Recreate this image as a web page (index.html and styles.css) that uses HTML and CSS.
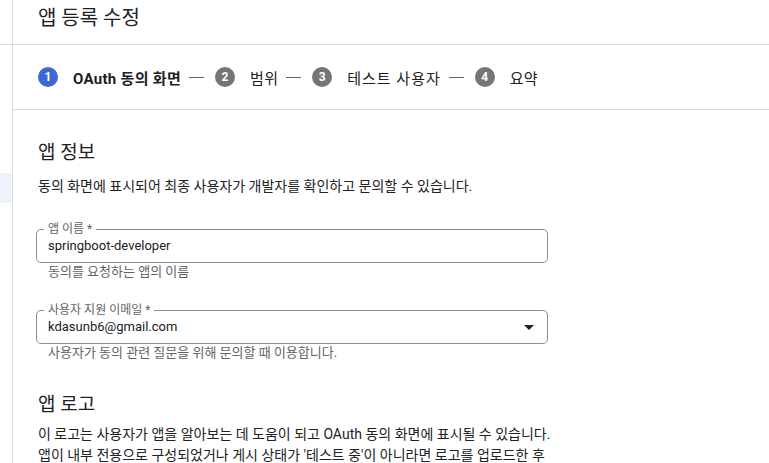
FILE: index.html
```html
<!DOCTYPE html>
<html lang="ko">
<head>
<meta charset="utf-8">
<title>앱 등록 수정</title>
<link rel="stylesheet" href="styles.css">
</head>
<body>
<div class="page">
  <aside class="side">
    <div class="side-top"></div>
    <div class="side-item"></div>
  </aside>
  <main class="main">
    <header class="header">
      <h1 class="title">앱 등록 수정</h1>
    </header>
    <nav class="stepper">
      <div class="step active"><span class="num">1</span><span class="label">OAuth 동의 화면</span></div>
      <span class="sep"></span>
      <div class="step"><span class="num">2</span><span class="label">범위</span></div>
      <span class="sep"></span>
      <div class="step"><span class="num">3</span><span class="label wide">테스트 사용자</span></div>
      <span class="sep"></span>
      <div class="step"><span class="num">4</span><span class="label">요약</span></div>
    </nav>
    <section class="content">
      <h2 class="section-title">앱 정보</h2>
      <p class="desc">동의 화면에 표시되어 최종 사용자가 개발자를 확인하고 문의할 수 있습니다.</p>

      <div class="field field-first">
        <div class="box">
          <span class="float-label">앱 이름 *</span>
          <span class="value">springboot-developer</span>
        </div>
        <div class="helper">동의를 요청하는 앱의 이름</div>
      </div>

      <div class="field">
        <div class="box">
          <span class="float-label">사용자 지원 이메일 *</span>
          <span class="value">kdasunb6@gmail.com</span>
          <svg class="arrow" width="10" height="5" viewBox="0 0 10 5"><polygon points="0,0 10,0 5,5" fill="#202124"/></svg>
        </div>
        <div class="helper">사용자가 동의 관련 질문을 위해 문의할 때 이용합니다.</div>
      </div>

      <h2 class="section-title logo-title">앱 로고</h2>
      <p class="para">이 로고는 사용자가 앱을 알아보는 데 도움이 되고 OAuth 동의 화면에 표시될 수 있습니다. 앱이 내부 전용으로 구성되었거나 게시 상태가 '테스트 중'이 아니라면 로고를 업로드한 후</p>
    </section>
  </main>
</div>
</body>
</html>
```

FILE: styles.css
```css
html, body {
  margin: 0;
  padding: 0;
  background: #ffffff;
  overflow: hidden;
}

body {
  font-family: Roboto, "Noto Sans CJK KR", "Noto Sans", sans-serif;
  color: #202124;
  word-break: keep-all;
}

.page {
  display: flex;
  width: 769px;
  height: 463px;
}

.side {
  width: 12px;
  flex: 0 0 12px;
  border-right: 1px solid #dadce0;
  display: flex;
  flex-direction: column;
}

.side-top {
  height: 44px;
  flex: 0 0 44px;
  border-bottom: 1px solid #dadce0;
}

.side-item {
  margin-top: 128px;
  height: 30px;
  flex: 0 0 30px;
  background: #eef2fc;
}

.main {
  flex: 1;
  display: block;
  min-width: 0;
}

.header {
  height: 41px;
  border-bottom: 1px solid #dadce0;
  padding: 3px 0 0 25px;
}

.title {
  margin: 0;
  font-size: 20px;
  line-height: 30px;
  font-weight: 400;
  color: #202124;
}

.stepper {
  height: 64px;
  border-bottom: 1px solid #dadce0;
  display: flex;
  align-items: center;
  padding-left: 25px;
  font-size: 15px;
}

.step {
  display: flex;
  align-items: center;
  gap: 15px;
  color: #202124;
}

.label {
  letter-spacing: 0.3px;
}

.label.wide {
  letter-spacing: 1px;
}

.num {
  width: 20px;
  height: 20px;
  border-radius: 50%;
  background: #757575;
  color: #ffffff;
  font-size: 12px;
  font-weight: 700;
  letter-spacing: 0;
  display: flex;
  align-items: center;
  justify-content: center;
  line-height: 1;
}

.step.active .num {
  background: #3e67d6;
}

.step.active .label {
  font-weight: 700;
}

.sep {
  width: 15px;
  height: 1px;
  background: #5f6368;
  margin: 0 11px 0 8px;
}

.content {
  padding: 29px 0 0 25px;
}

.section-title {
  margin: 0;
  font-size: 19px;
  line-height: 28px;
  font-weight: 400;
  color: #202124;
}

.desc {
  margin: 9px 0 0 0;
  font-size: 14px;
  line-height: 20px;
  color: #202124;
}

.field {
  width: 512px;
  margin-left: -2px;
  margin-top: 30px;
}

.field-first {
  margin-top: 33px;
}

.box {
  position: relative;
  height: 32px;
  border: 1px solid #8c8f94;
  border-radius: 5px;
  display: flex;
  align-items: center;
  padding: 0 13px 0 11px;
}

.float-label {
  position: absolute;
  left: 7px;
  top: -8px;
  padding: 0 4px;
  background: #ffffff;
  font-size: 12px;
  line-height: 14px;
  color: #5f6368;
}

.value {
  flex: 1;
  font-size: 13px;
  line-height: 20px;
  color: #202124;
}

.arrow {
  display: block;
  flex: 0 0 10px;
}

.helper {
  margin-top: 1px;
  padding-left: 12px;
  font-size: 13px;
  line-height: 16px;
  color: #5f6368;
}

.logo-title {
  margin-top: 30px;
}

.para {
  margin: 5px 0 0 0;
  width: 525px;
  font-size: 14px;
  line-height: 21px;
  color: #202124;
}
```
